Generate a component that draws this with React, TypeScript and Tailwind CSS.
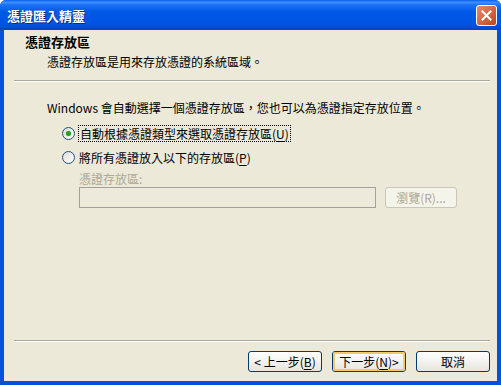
import React from "react";

const Mn: React.FC<{ k: string }> = ({ k }) => (
  <span>
    (<span className="underline underline-offset-2">{k}</span>)
  </span>
);

const Radio: React.FC<{ checked?: boolean }> = ({ checked }) => (
  <span className="w-[13px] h-[13px] rounded-full border border-[#1C5180] bg-gradient-to-br from-[#DCDCD7] to-white flex items-center justify-center shrink-0">
    {checked && <span className="w-[5px] h-[5px] rounded-full bg-[#21A121] shadow-[0_0_1px_#6fd66f]" />}
  </span>
);

const XpButton: React.FC<{ children: React.ReactNode; primary?: boolean }> = ({ children, primary }) => (
  <button className="w-[74px] h-[21px] rounded-[3px] border border-[#003C74] bg-gradient-to-b from-white to-[#E6E5DE] flex items-center justify-center text-[12px] leading-none text-black p-0">
    <span
      className={`w-full h-full rounded-[2px] flex items-center justify-center ${
        primary ? "border-2 border-[#F5C868]" : "border border-transparent"
      }`}
    >
      {children}
    </span>
  </button>
);

export default function App() {
  return (
    <div className="w-[501px] h-[385px] flex flex-col bg-[#0550DC] rounded-t-[6px] overflow-hidden font-['Noto_Sans_CJK_TC','Liberation_Sans',sans-serif] text-[12px] text-black">
      {/* title bar */}
      <div className="h-[30px] shrink-0 flex items-center justify-between pl-[7px] pr-[4px] bg-[linear-gradient(to_bottom,#0A61E8_0%,#3C8FFF_8%,#1D72F5_16%,#0058E6_40%,#0054E3_80%,#0046C8_100%)]">
        <span className="text-white font-bold text-[13px] leading-none [text-shadow:1px_1px_0_#0A2A80]">憑證匯入精靈</span>
        <span className="w-[21px] h-[21px] rounded-[3px] border border-white bg-gradient-to-br from-[#E9896B] to-[#C4401D] flex items-center justify-center">
          <svg width="11" height="11" viewBox="0 0 11 11">
            <path d="M1.5 1.5 L9.5 9.5 M9.5 1.5 L1.5 9.5" stroke="white" strokeWidth="2" strokeLinecap="square" />
          </svg>
        </span>
      </div>

      {/* body */}
      <div className="flex-1 mx-[4px] mb-[4px] bg-[#ECE9D8] flex flex-col">
        <div className="h-[50px] shrink-0 pt-[4px]">
          <div className="pl-[21px] font-bold text-[13px] leading-[16px]">憑證存放區</div>
          <div className="pl-[43px] mt-[4px] leading-[15px]">憑證存放區是用來存放憑證的系統區域。</div>
        </div>
        <div className="ml-[10px] mr-[7px] border-t border-[#ACA899] border-b border-b-white" />

        <div className="pl-[43px] mt-[18px] leading-[16px]">
          Windows 會自動選擇一個憑證存放區，您也可以為憑證指定存放位置。
        </div>

        <div className="pl-[58px] mt-[7px] h-[20px] flex items-center gap-[3px]">
          <Radio checked />
          <span className="border border-dotted border-black px-[1px] leading-[15px]">
            自動根據憑證類型來選取憑證存放區<Mn k="U" />
          </span>
        </div>
        <div className="pl-[58px] mt-[4px] h-[20px] flex items-center gap-[4px]">
          <Radio />
          <span className="leading-[15px]">
            將所有憑證放入以下的存放區<Mn k="P" />
          </span>
        </div>

        <div className="pl-[75px] mt-[4px] leading-[15px] text-[#ACA899]">憑證存放區:</div>
        <div className="pl-[75px] mt-[1px] flex items-center gap-[9px]">
          <div className="w-[297px] h-[21px] border border-[#A2A29A] bg-[#EDEADB]" />
          <div className="w-[72px] h-[21px] rounded-[3px] border border-[#C9C7BA] bg-[#F5F4EA] flex items-center justify-center text-[#ACA899] leading-none">
            瀏覽(R)...
          </div>
        </div>

        <div className="mt-auto ml-[10px] mr-[7px] border-t border-[#ACA899] border-b border-b-white" />
        <div className="mt-[9px] mb-[9px] pr-[7px] flex justify-end gap-[10px]">
          <XpButton>
            &lt; 上一步<Mn k="B" />
          </XpButton>
          <XpButton primary>
            下一步<Mn k="N" /> &gt;
          </XpButton>
          <XpButton>取消</XpButton>
        </div>
      </div>
    </div>
  );
}
